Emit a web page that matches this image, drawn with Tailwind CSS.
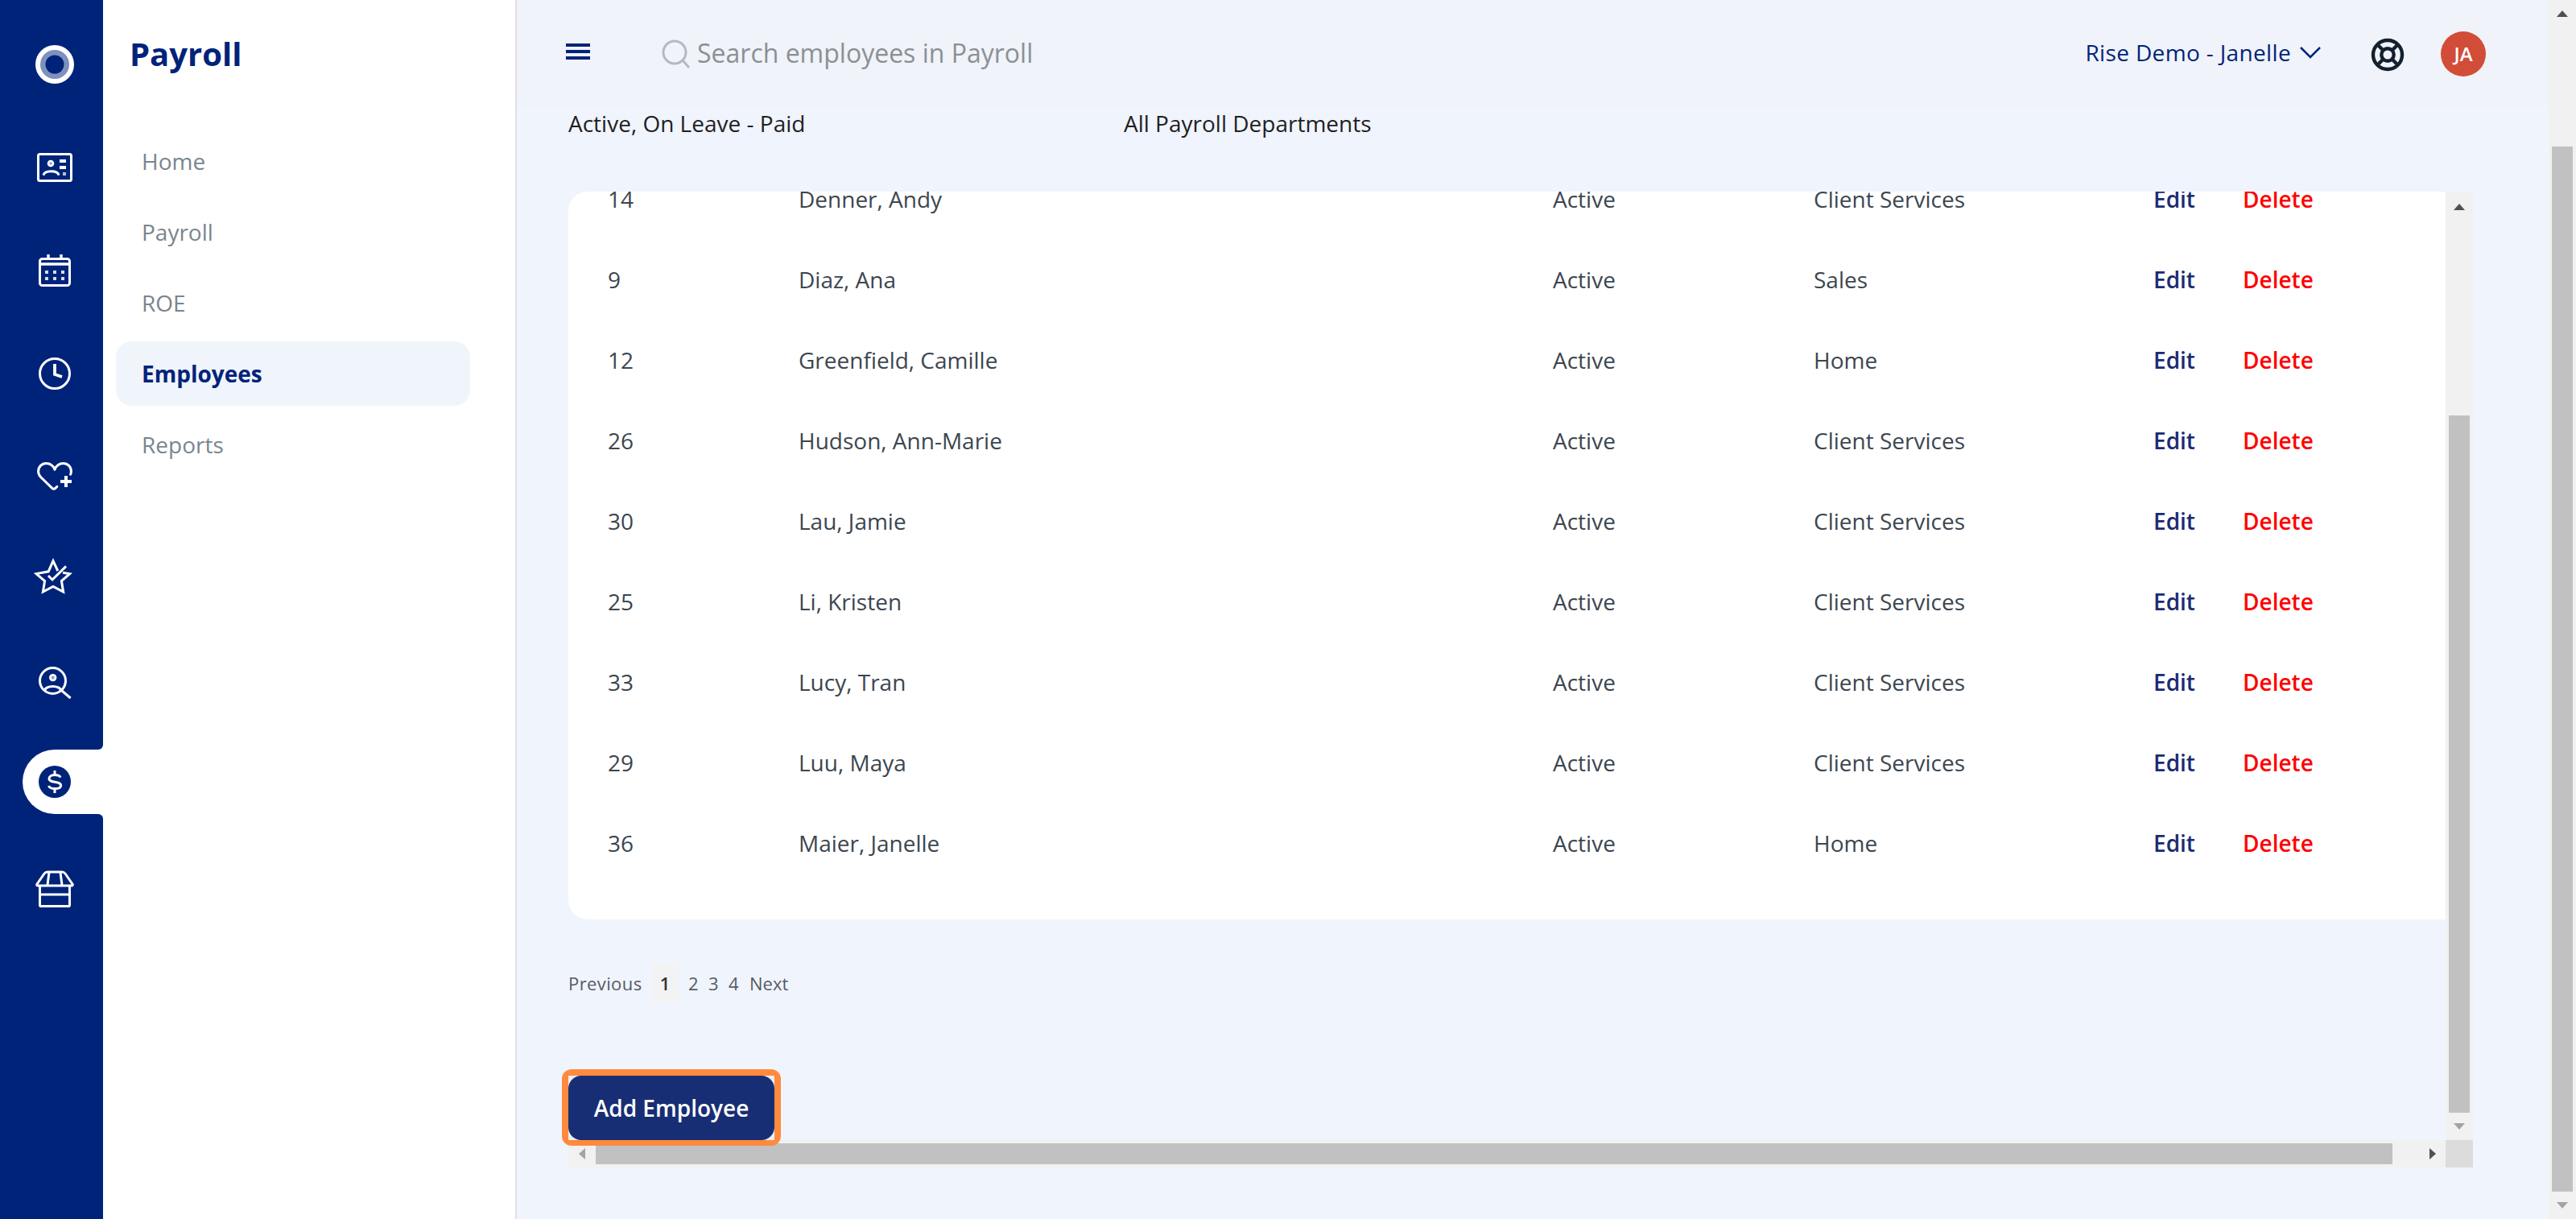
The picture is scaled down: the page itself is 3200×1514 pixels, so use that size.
<!DOCTYPE html>
<html lang="en">
<head>
  <meta charset="UTF-8" />
  <title>Payroll - Employees</title>
  <script src="https://cdn.jsdelivr.net/npm/@tailwindcss/browser@4"></script>
</head>
<body class="h-screen w-[3200px] overflow-hidden flex font-['Open_Sans',sans-serif] bg-[#f0f4fc] text-[28px] leading-[40px]">

  <!-- icon rail -->
  <nav class="w-[128px] shrink-0 bg-[#00237a] flex flex-col items-center pt-[16px] pl-[8px] text-white">
    <div class="h-[128px] flex items-center justify-center">
      <svg class="w-[48px] h-[48px]" viewBox="0 0 48 48"><circle cx="24" cy="24" r="24" fill="#fff"/><circle cx="24" cy="24" r="18" fill="#7e90bd"/><circle cx="24" cy="24" r="11.5" fill="#00237a"/></svg>
    </div>
    <div class="h-[128px] flex items-center justify-center">
      <svg class="w-[48px] h-[48px]" viewBox="0 0 24 24" fill="none" stroke="currentColor" stroke-width="1.5"><rect x="1.75" y="3.75" width="20.5" height="16.5" rx="1"/><circle cx="9.5" cy="9.5" r="1.5" stroke-width="1.3" fill="#8f9fc6"/><path d="M5 16.8c.6-3.200 8.800-3.200 9.500 0"/><path d="M15 8h4M15 12h4" stroke-width="2"/><path d="M17 16h2" stroke-width="2" stroke="#b4bfda"/></svg>
    </div>
    <div class="h-[128px] flex items-center justify-center">
      <svg class="w-[48px] h-[48px]" viewBox="0 0 24 24" fill="none" stroke="currentColor" stroke-width="1.5"><rect x="2.75" y="4.75" width="18.500" height="16.500" rx="1.500"/><path d="M8 2v3M16 2v3M2.750 8h18.500" stroke-width="1.700"/><path d="M6 13h2M11 13h2M16 13h2M6 17h2M11 17h2M16 17h2" stroke-width="2" stroke="#d5dcec"/></svg>
    </div>
    <div class="h-[128px] flex items-center justify-center">
      <svg class="w-[48px] h-[48px]" viewBox="0 0 24 24" fill="none" stroke="currentColor" stroke-width="1.5"><circle cx="12" cy="12" r="9.250"/><path d="M12 6v6.500l4.500 1.500" stroke-width="1.900"/></svg>
    </div>
    <div class="h-[128px] flex items-center justify-center">
      <svg class="w-[48px] h-[48px]" viewBox="0 0 24 24" fill="none" stroke="currentColor" stroke-width="1.5" stroke-linecap="round"><path d="M12 7.500C11 5 9 3.700 6.700 3.700 3.800 3.700 1.800 6 1.800 8.700c0 1.500.7 2.700 1.600 3.700l7 6.800c.6.6 1.400.6 2 0l1-1"/><path d="M12 7.500C13 5 15 3.700 17.300 3.700c2.900 0 4.900 2.300 4.900 5 0 .8-.1 1.300-.4 1.900"/><path d="M19 11.500v7M15.500 15h7" stroke-width="2" stroke-linecap="butt"/></svg>
    </div>
    <div class="h-[120px] flex items-center justify-center">
      <svg class="w-[48px] h-[48px] -ml-[4px]" viewBox="0 0 24 24" fill="none" stroke="currentColor" stroke-width="1.5"><path d="M14.900 8.500L12 2.300 9.100 8.900 1.500 10.300 6.800 14.800 5.700 21.500 12 18.200 18.300 21.500 17.200 14.800 22.300 10.300 18 9.600"/><path d="M9 11.500l2.500 2.500L20 5.700"/></svg>
    </div>
    <div class="h-[142px] flex items-center justify-center">
      <svg class="w-[48px] h-[48px]" viewBox="0 0 24 24" fill="none" stroke="currentColor" stroke-width="1.5"><circle cx="10.750" cy="11.250" r="8"/><circle cx="10.850" cy="9.300" r="1.700" stroke-width="1.300" fill="#8f9fc6"/><path d="M5.800 17.500c0-3.700 10-3.700 10 0"/><path d="M16.500 17.500l5.300 4.500"/></svg>
    </div>
    <!-- active tab -->
    <div class="relative self-end w-[100px] h-[80px] mt-[13px] mb-[69px] bg-white rounded-l-[40px] flex items-center pl-[16px]">
      <svg class="w-[48px] h-[48px]" viewBox="0 0 24 24" fill="none"><circle cx="12" cy="12" r="10" fill="#00237a"/><path d="M15.500 9.300c-.3-1-1.700-1.500-3.500-1.500-2 0-3.500.8-3.500 2.200 0 3 7.300 1.300 7.300 4.200 0 1.300-1.600 2.100-3.800 2.100-1.800 0-3.300-.7-3.800-1.800M12 5v3M12 16v3" stroke="#fff" stroke-width="1.500"/></svg>
      <div class="absolute right-0 -top-[6px] w-[6px] h-[6px] bg-white"><div class="w-full h-full bg-[#00237a] rounded-br-[6px]"></div></div>
      <div class="absolute right-0 -bottom-[6px] w-[6px] h-[6px] bg-white"><div class="w-full h-full bg-[#00237a] rounded-tr-[6px]"></div></div>
    </div>
    <div class="h-[48px] flex items-center justify-center">
      <svg class="w-[48px] h-[48px]" viewBox="0 0 24 24" fill="none" stroke="currentColor" stroke-width="1.500" stroke-linejoin="round"><path d="M1 9L5.500 2.500C6 1.800 6.500 1.500 7.500 1.500h9c1 0 1.500.3 2 1L23 9c.3.6 0 1-.5 1H1.500C1 10 .7 9.600 1 9z"/><path d="M8.500 1.800L7.500 9.500M15.500 1.800l1 7.700"/><path d="M2.750 10v12c0 .5.3.8.8.8h16.900c.5 0 .8-.3.8-.8V10M2.750 15.500h18.500"/></svg>
    </div>
  </nav>

  <!-- section menu -->
  <aside class="w-[514px] shrink-0 bg-white border-r-[2px] border-[#dfe1e5] pl-[16px]">
    <h1 class="pl-[17px] pt-[43px] h-[160px] text-[40px] leading-[48px] font-bold text-[#00237a]">Payroll</h1>
    <ul class="w-[440px] text-[#7a858e] flex flex-col gap-[8px]">
      <li class="h-[80px] pl-[32px] flex items-center">Home</li>
      <li class="h-[80px] pl-[32px] flex items-center">Payroll</li>
      <li class="h-[80px] pl-[32px] flex items-center">ROE</li>
      <li class="h-[80px] pl-[32px] flex items-center rounded-[20px] bg-[#f0f4fb] font-bold text-[#00237a]">Employees</li>
      <li class="h-[80px] pl-[32px] flex items-center">Reports</li>
    </ul>
  </aside>

  <!-- main -->
  <main class="flex-1 flex min-w-0">
    <div class="flex-1 min-w-0">
      <header class="h-[133px] bg-[#f0f3f9] flex items-center pl-[61px] pr-[78px]">
        <svg class="w-[30px] h-[20px] mr-[89px] -mt-[5px]" viewBox="0 0 30 20" fill="#00237a"><rect width="30" height="4"/><rect y="8" width="30" height="4"/><rect y="16" width="30" height="4"/></svg>
        <svg class="w-[36px] h-[36px] mr-[8px]" viewBox="0 0 36 36" fill="none" stroke="#b4bac0" stroke-width="3"><circle cx="16" cy="16" r="14"/><path d="M26 26l8 9"/></svg>
        <span class="text-[32px] text-[#8b9096] -mt-[2px]">Search employees in Payroll</span>
        <span class="ml-auto text-[#00237a] tracking-[0.35px] -mt-[4px]">Rise Demo - Janelle</span>
        <svg class="w-[26px] h-[16px] ml-[11px] -mt-[4px]" viewBox="0 0 26 16" fill="none" stroke="#00237a" stroke-width="2.500"><path d="M1 2l12 12L25 2"/></svg>
        <svg class="w-[42px] h-[42px] ml-[62px] mt-[2px]" viewBox="0 0 24 24" fill="none" stroke="#14202e" stroke-width="2.500"><circle cx="12" cy="12" r="10.300"/><circle cx="12" cy="12" r="4.400"/><path d="M5 5l4 4M15 9l4-4M15 15l4 4M9 15l-4 4"/></svg>
        <span class="ml-[45px] w-[56px] h-[56px] rounded-full bg-[#d14d38] text-white text-[24px] font-semibold flex items-center justify-center">JA</span>
      </header>

      <!-- filters -->
      <div class="h-[105px] flex pl-[64px] text-[#1f1f1f]">
        <span class="w-[690px] h-[40px]">Active, On Leave - Paid</span>
        <span class="h-[40px]">All Payroll Departments</span>
      </div>

      <!-- scroll area -->
      <div class="ml-[64px] w-[2366px] h-[1212px] grid grid-cols-[2332px_34px] grid-rows-[1178px_34px]">
        <div class="min-w-0 h-[1178px]">
          <div class="h-[904px] bg-white rounded-l-[24px] overflow-hidden">
            <div class="-mt-[41px] text-[#3c4650]">
              <div class="flex h-[100px] items-center pl-[49px]"><span class="w-[237px]">14</span><span class="w-[937px]">Denner, Andy</span><span class="w-[324px]">Active</span><span class="w-[422px]">Client Services</span><span class="w-[111px] font-semibold text-[#1a2b74]">Edit</span><span class="font-semibold text-[#ff0000]">Delete</span></div>
              <div class="flex h-[100px] items-center pl-[49px]"><span class="w-[237px]">9</span><span class="w-[937px]">Diaz, Ana</span><span class="w-[324px]">Active</span><span class="w-[422px]">Sales</span><span class="w-[111px] font-semibold text-[#1a2b74]">Edit</span><span class="font-semibold text-[#ff0000]">Delete</span></div>
              <div class="flex h-[100px] items-center pl-[49px]"><span class="w-[237px]">12</span><span class="w-[937px]">Greenfield, Camille</span><span class="w-[324px]">Active</span><span class="w-[422px]">Home</span><span class="w-[111px] font-semibold text-[#1a2b74]">Edit</span><span class="font-semibold text-[#ff0000]">Delete</span></div>
              <div class="flex h-[100px] items-center pl-[49px]"><span class="w-[237px]">26</span><span class="w-[937px]">Hudson, Ann-Marie</span><span class="w-[324px]">Active</span><span class="w-[422px]">Client Services</span><span class="w-[111px] font-semibold text-[#1a2b74]">Edit</span><span class="font-semibold text-[#ff0000]">Delete</span></div>
              <div class="flex h-[100px] items-center pl-[49px]"><span class="w-[237px]">30</span><span class="w-[937px]">Lau, Jamie</span><span class="w-[324px]">Active</span><span class="w-[422px]">Client Services</span><span class="w-[111px] font-semibold text-[#1a2b74]">Edit</span><span class="font-semibold text-[#ff0000]">Delete</span></div>
              <div class="flex h-[100px] items-center pl-[49px]"><span class="w-[237px]">25</span><span class="w-[937px]">Li, Kristen</span><span class="w-[324px]">Active</span><span class="w-[422px]">Client Services</span><span class="w-[111px] font-semibold text-[#1a2b74]">Edit</span><span class="font-semibold text-[#ff0000]">Delete</span></div>
              <div class="flex h-[100px] items-center pl-[49px]"><span class="w-[237px]">33</span><span class="w-[937px]">Lucy, Tran</span><span class="w-[324px]">Active</span><span class="w-[422px]">Client Services</span><span class="w-[111px] font-semibold text-[#1a2b74]">Edit</span><span class="font-semibold text-[#ff0000]">Delete</span></div>
              <div class="flex h-[100px] items-center pl-[49px]"><span class="w-[237px]">29</span><span class="w-[937px]">Luu, Maya</span><span class="w-[324px]">Active</span><span class="w-[422px]">Client Services</span><span class="w-[111px] font-semibold text-[#1a2b74]">Edit</span><span class="font-semibold text-[#ff0000]">Delete</span></div>
              <div class="flex h-[100px] items-center pl-[49px]"><span class="w-[237px]">36</span><span class="w-[937px]">Maier, Janelle</span><span class="w-[324px]">Active</span><span class="w-[422px]">Home</span><span class="w-[111px] font-semibold text-[#1a2b74]">Edit</span><span class="font-semibold text-[#ff0000]">Delete</span></div>
            </div>
          </div>

          <!-- pagination -->
          <div class="mt-[55px] h-[48px] flex items-center text-[22px] text-[#555b66]">
            <span class="w-[104px] tracking-[0.4px]">Previous</span>
            <span class="w-[32px] h-[48px] bg-[#f3f3f3] flex items-center justify-center font-semibold text-[#333]">1</span>
            <span class="ml-[13px] w-[25px]">2</span>
            <span class="w-[25px]">3</span>
            <span class="w-[26px]">4</span>
            <span>Next</span>
          </div>

          <!-- highlighted action -->
          <div class="mt-[83px] relative z-10 -ml-[8px] w-[272px] h-[95px] p-[8px] pb-[7px] bg-[#ff8a3d] rounded-[12px]">
            <div class="bg-[#eeeeee]">
              <button class="w-[256px] h-[80px] rounded-[16px] bg-[#182e74] text-white font-semibold block">Add Employee</button>
            </div>
          </div>
        </div>

        <!-- inner vertical scrollbar -->
        <div class="bg-[#f1f1f1] flex flex-col items-center">
          <div class="h-[34px] pt-[4px] flex items-center justify-center"><svg class="w-[14px] h-[8px]" viewBox="0 0 14 8" fill="#505050"><path d="M7 0l7 8H0z"/></svg></div>
          <div class="h-[244px] w-full"></div>
          <div class="w-[26px] h-[866px] bg-[#c1c1c1]"></div>
          <div class="h-[34px] flex items-center justify-center"><svg class="w-[14px] h-[8px]" viewBox="0 0 14 8" fill="#a3a3a3"><path d="M0 0h14L7 8z"/></svg></div>
        </div>

        <!-- inner horizontal scrollbar -->
        <div class="bg-[#f1f1f1] flex items-center">
          <div class="w-[34px] flex items-center justify-center"><svg class="w-[8px] h-[14px]" viewBox="0 0 8 14" fill="#a3a3a3"><path d="M8 0v14L0 7z"/></svg></div>
          <div class="w-[2232px] h-[26px] bg-[#c1c1c1]"></div>
          <div class="flex-1 flex items-center pl-[46px]"><svg class="w-[8px] h-[14px]" viewBox="0 0 8 14" fill="#505050"><path d="M0 0l8 7-8 7z"/></svg></div>
        </div>
        <div class="bg-[#dcdcdc]"></div>
      </div>
    </div>

    <!-- page scrollbar -->
    <div class="w-[34px] shrink-0 bg-[#f1f1f1] flex flex-col items-center">
      <div class="h-[34px] flex items-center justify-center"><svg class="w-[14px] h-[8px]" viewBox="0 0 14 8" fill="#505050"><path d="M7 0l7 8H0z"/></svg></div>
      <div class="h-[148px]"></div>
      <div class="w-[26px] h-[1298px] bg-[#c1c1c1]"></div>
      <div class="h-[34px] flex items-center justify-center"><svg class="w-[14px] h-[8px]" viewBox="0 0 14 8" fill="#a3a3a3"><path d="M0 0h14L7 8z"/></svg></div>
    </div>
  </main>
</body>
</html>
